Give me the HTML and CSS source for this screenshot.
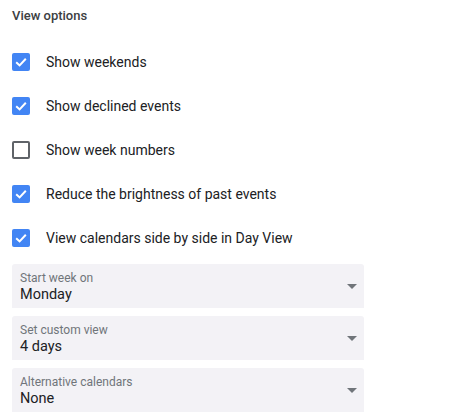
FILE: index.html
```html
<!DOCTYPE html>
<html>
<head>
<meta charset="utf-8">
<link rel="stylesheet" href="styles.css">
</head>
<body>
<div class="panel">
  <div class="title">View options</div>
  <div class="options">
    <label class="row"><span class="box checked"><svg viewBox="0 0 18 18" width="18" height="18"><path d="M4.2 9.2 L7.6 12.4 L13.8 5.8" fill="none" stroke="#fff" stroke-width="2"/></svg></span><span class="text">Show weekends</span></label>
    <label class="row"><span class="box checked"><svg viewBox="0 0 18 18" width="18" height="18"><path d="M4.2 9.2 L7.6 12.4 L13.8 5.8" fill="none" stroke="#fff" stroke-width="2"/></svg></span><span class="text">Show declined events</span></label>
    <label class="row"><span class="box"></span><span class="text">Show week numbers</span></label>
    <label class="row"><span class="box checked"><svg viewBox="0 0 18 18" width="18" height="18"><path d="M4.2 9.2 L7.6 12.4 L13.8 5.8" fill="none" stroke="#fff" stroke-width="2"/></svg></span><span class="text">Reduce the brightness of past events</span></label>
    <label class="row"><span class="box checked"><svg viewBox="0 0 18 18" width="18" height="18"><path d="M4.2 9.2 L7.6 12.4 L13.8 5.8" fill="none" stroke="#fff" stroke-width="2"/></svg></span><span class="text">View calendars side by side in Day View</span></label>
  </div>
  <div class="selects">
    <div class="select"><div class="field"><div class="label">Start week on</div><div class="value">Monday</div></div><span class="arrow"></span></div>
    <div class="select"><div class="field"><div class="label">Set custom view</div><div class="value">4 days</div></div><span class="arrow"></span></div>
    <div class="select"><div class="field"><div class="label">Alternative calendars</div><div class="value">None</div></div><span class="arrow"></span></div>
  </div>
</div>
</body>
</html>
```
FILE: styles.css
```css
html, body {
  margin: 0;
  padding: 0;
  background: #fff;
}
body {
  font-family: Roboto, "Liberation Sans", Arial, sans-serif;
  color: #202124;
}
.panel {
  padding: 6px 0 0 12px;
}
.title {
  font-size: 13px;
  line-height: 20px;
  font-weight: 500;
  color: #3c4043;
}
.options {
  margin-top: 14px;
  display: flex;
  flex-direction: column;
}
.row {
  display: flex;
  align-items: center;
  height: 44px;
  gap: 16px;
}
.box {
  width: 18px;
  height: 18px;
  box-sizing: border-box;
  border: 2px solid #5f6368;
  border-radius: 2px;
  display: flex;
  align-items: center;
  justify-content: center;
  flex: none;
}
.box.checked {
  border: none;
  background: #4285f4;
}
.box svg {
  display: block;
}
.text {
  font-size: 14px;
  color: #202124;
}
.selects {
  margin-top: 4px;
  display: flex;
  flex-direction: column;
  gap: 8px;
  width: 352px;
}
.select {
  height: 44px;
  box-sizing: border-box;
  background: #f3f2f6;
  border-radius: 3px 3px 0 0;
  display: flex;
  align-items: center;
  padding: 0 7px 0 8px;
}
.field {
  flex: 1;
  align-self: flex-start;
  padding-top: 6px;
}
.label {
  font-size: 12px;
  line-height: 16px;
  color: #70757a;
}
.value {
  font-size: 14.5px;
  line-height: 18px;
  color: #202124;
}
.arrow {
  width: 0;
  height: 0;
  border-left: 5px solid transparent;
  border-right: 5px solid transparent;
  border-top: 5px solid #70757a;
}
```
